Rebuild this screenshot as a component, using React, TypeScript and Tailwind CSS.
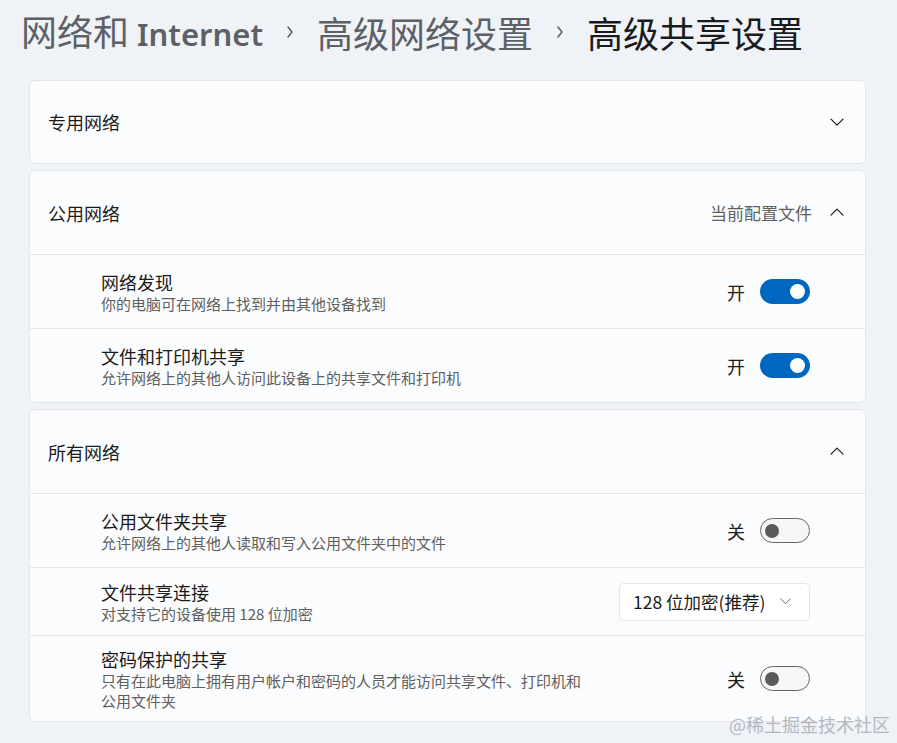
import React from "react";

const ChevronDown = ({ size = 14, color = "#1b1b1b" }: { size?: number; color?: string }) => (
  <svg width={size} height={size * 0.6} viewBox="0 0 14 8" fill="none">
    <polyline points="1,1 7,7 13,1" stroke={color} strokeWidth="1.2" strokeLinecap="round" strokeLinejoin="round" />
  </svg>
);

const ChevronUp = () => (
  <svg width={14} height={8.4} viewBox="0 0 14 8" fill="none">
    <polyline points="1,7 7,1 13,7" stroke="#1b1b1b" strokeWidth="1.2" strokeLinecap="round" strokeLinejoin="round" />
  </svg>
);

const Sep = () => (
  <svg width="10" height="14" viewBox="0 0 10 14" fill="none" className="mx-[22px]">
    <polyline points="3,2 7,7 3,12" stroke="#5d6166" strokeWidth="1.6" strokeLinecap="round" strokeLinejoin="round" />
  </svg>
);

const Toggle = ({ on }: { on: boolean }) =>
  on ? (
    <div className="w-[50px] h-[25px] rounded-full bg-[#0067c0] flex items-center justify-end pr-[5px]">
      <div className="w-[15px] h-[15px] rounded-full bg-white" />
    </div>
  ) : (
    <div className="w-[50px] h-[25px] rounded-full bg-[#f6f6f6] border-[1.5px] border-[#666666] flex items-center pl-[4px]">
      <div className="w-[14px] h-[14px] rounded-full bg-[#5a5a5a]" />
    </div>
  );

const Row = ({
  title,
  sub,
  right,
  h,
}: {
  title: string;
  sub: React.ReactNode;
  right: React.ReactNode;
  h: string;
}) => (
  <div className={`border-t border-[#e6e7e9] flex items-center pl-[71px] pr-[55px] ${h}`}>
    <div className="flex-1 flex flex-col">
      <div className="text-[18px] leading-[24px] text-[#1b1b1b]">{title}</div>
      <div className="text-[15px] leading-[20px] text-[#5f5f5f] w-[486px]">{sub}</div>
    </div>
    {right}
  </div>
);

const Switch = ({ on }: { on: boolean }) => (
  <div className="flex items-center gap-[15px]">
    <span className="text-[18px] leading-[24px] text-[#1b1b1b]">{on ? "开" : "关"}</span>
    <Toggle on={on} />
  </div>
);

export default function App() {
  return (
    <div className="w-[897px] h-[743px] bg-[#eff3f8] relative overflow-hidden font-['Noto_Sans_CJK_SC','Noto_Sans',sans-serif]">
      <div className="h-[64px] flex items-center pl-[21px] text-[36px] leading-[42px]">
        <span className="text-[#5d6166]">
          网络和 <span className="font-['Noto_Sans',sans-serif] font-semibold text-[31px]">Internet</span>
        </span>
        <Sep />
        <span className="text-[#5d6166]">高级网络设置</span>
        <Sep />
        <span className="text-[#1b1b1b]">高级共享设置</span>
      </div>

      <div className="mt-[16px] ml-[29px] mr-[31px] flex flex-col gap-[6px]">
        <div className="h-[84px] bg-[#fbfcfd] border border-[#e3e5e8] rounded-[6px] flex items-center pl-[18px] pr-[21px]">
          <span className="flex-1 text-[18px] leading-[24px] text-[#1b1b1b]">专用网络</span>
          <ChevronDown />
        </div>

        <div className="bg-[#fbfcfd] border border-[#e3e5e8] rounded-[6px] flex flex-col">
          <div className="h-[83px] flex items-center pl-[18px] pr-[21px]">
            <span className="flex-1 text-[18px] leading-[24px] text-[#1b1b1b]">公用网络</span>
            <span className="text-[17px] leading-[24px] text-[#5f5f5f] mr-[18px]">当前配置文件</span>
            <ChevronUp />
          </div>
          <Row h="h-[74px]" title="网络发现" sub="你的电脑可在网络上找到并由其他设备找到" right={<Switch on />} />
          <Row h="h-[74px]" title="文件和打印机共享" sub="允许网络上的其他人访问此设备上的共享文件和打印机" right={<Switch on />} />
        </div>

        <div className="bg-[#fbfcfd] border border-[#e3e5e8] rounded-[6px] flex flex-col">
          <div className="h-[83px] flex items-center pl-[18px] pr-[21px]">
            <span className="flex-1 text-[18px] leading-[24px] text-[#1b1b1b]">所有网络</span>
            <ChevronUp />
          </div>
          <Row h="h-[74px]" title="公用文件夹共享" sub="允许网络上的其他人读取和写入公用文件夹中的文件" right={<Switch on={false} />} />
          <Row
            h="h-[68px]"
            title="文件共享连接"
            sub="对支持它的设备使用 128 位加密"
            right={
              <div className="w-[191px] h-[38px] bg-white border border-[#e5e5e5] rounded-[5px] flex items-center pl-[13px] pr-[18px]">
                <span className="flex-1 text-[17.5px] leading-[24px] text-[#1b1b1b]">128 位加密(推荐)</span>
                <ChevronDown size={11} color="#5f5f5f" />
              </div>
            }
          />
          <Row
            h="h-[86px]"
            title="密码保护的共享"
            sub="只有在此电脑上拥有用户帐户和密码的人员才能访问共享文件、打印机和公用文件夹"
            right={<Switch on={false} />}
          />
        </div>
      </div>

      <div className="absolute right-[7px] bottom-[7px] text-[18px] leading-[24px] text-[#b4b8be] font-['Noto_Sans_CJK_SC',serif]">
        @稀土掘金技术社区
      </div>
    </div>
  );
}
